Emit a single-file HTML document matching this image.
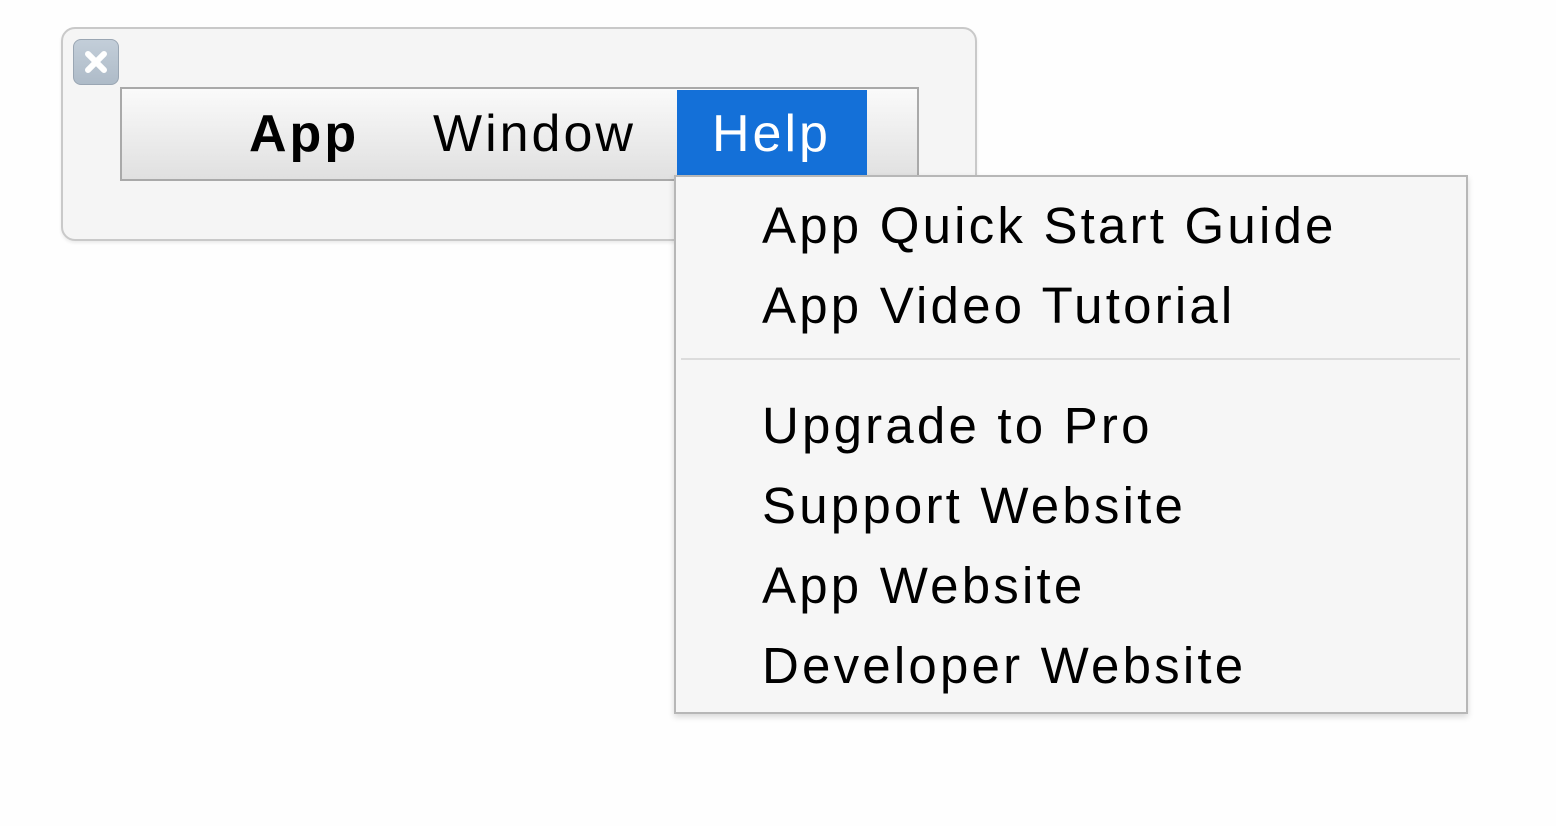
<!DOCTYPE html><html><head><style>
body{margin:0;width:1556px;height:826px;background:#fefefe;position:relative;overflow:hidden;font-family:"Liberation Sans",sans-serif;}
.win{position:absolute;left:61px;top:27px;width:912px;height:210px;border:2px solid #c9c9c9;border-radius:14px;background:#f5f5f5;box-shadow:0 2px 3px rgba(0,0,0,.08);}
.close{position:absolute;left:73px;top:39px;width:44px;height:44px;border:1px solid #9aa6b3;border-radius:8px;background:linear-gradient(#c3ced9,#aebbc8);}
.bar{position:absolute;left:120px;top:87px;width:795px;height:90px;border:2px solid #a9a9a9;background:linear-gradient(#fafafa,#e0e0e0);}
.t{position:absolute;font-size:52px;line-height:1;color:#000;white-space:nowrap;letter-spacing:3px;}
.help{position:absolute;left:677px;top:90px;width:190px;height:87px;background:#1470d8;}
.menu{position:absolute;left:674px;top:175px;width:790px;height:535px;border:2px solid #b7b7b7;background:#f6f6f6;box-shadow:0 3px 6px rgba(0,0,0,.15);}
.sep{position:absolute;left:681px;top:358px;width:779px;height:2px;background:#dcdcdc;}
.m{position:absolute;left:762px;font-size:51px;line-height:1;color:#000;white-space:nowrap;letter-spacing:3.2px;}
</style></head><body>
<div class="win"></div>
<div class="close"><svg width="44" height="44" viewBox="0 0 44 44"><path d="M14 14L30 30M30 14L14 30" stroke="#fff" stroke-width="6" stroke-linecap="round"/></svg></div>
<div class="bar"></div>
<div class="help"></div>
<div class="t" style="left:249px;top:108px;font-weight:bold">App</div>
<div class="t" style="left:433px;top:108px">Window</div>
<div class="t" style="left:712px;top:108px;color:#fff">Help</div>
<div class="menu"></div>
<div class="sep"></div>
<div class="m" style="top:200px">App Quick Start Guide</div>
<div class="m" style="top:280px">App Video Tutorial</div>
<div class="m" style="top:400px">Upgrade to Pro</div>
<div class="m" style="top:480px">Support Website</div>
<div class="m" style="top:560px">App Website</div>
<div class="m" style="top:640px">Developer Website</div>
</body></html>
